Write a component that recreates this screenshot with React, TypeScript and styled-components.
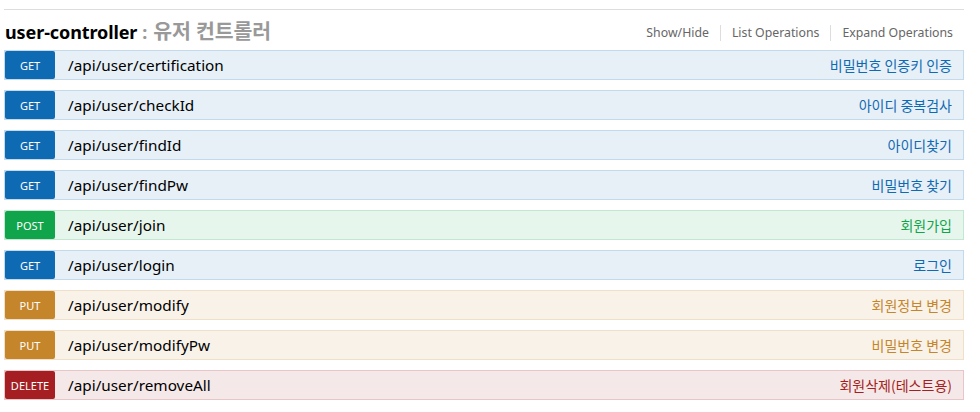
import React from "react";
import styled, { createGlobalStyle } from "styled-components";

const Global = createGlobalStyle`
  html, body { margin: 0; padding: 0; background: #fff; }
  body { font-family: "Noto Sans", "Noto Sans CJK KR", sans-serif; }
`;

type Method = "GET" | "POST" | "PUT" | "DELETE";

const palette: Record<Method, { main: string; bg: string; border: string }> = {
  GET: { main: "#0f6ab4", bg: "#e7f0f7", border: "#c3d9ec" },
  POST: { main: "#10a54a", bg: "#e7f6ec", border: "#c3e8d1" },
  PUT: { main: "#c5862b", bg: "#f9f2e9", border: "#f0e0ca" },
  DELETE: { main: "#a41e22", bg: "#f5e8e8", border: "#e8c6c7" },
};

const Resource = styled.section`
  margin: 9px 16px 0 4px;
  border-top: 1px solid #ddd;
`;

const Header = styled.div`
  display: flex;
  justify-content: space-between;
  align-items: center;
  height: 40px;
`;

const Title = styled.h2`
  margin: 0 0 0 1px;
  font-size: 18px;
  font-weight: bold;
  color: #000;
  font-family: "Noto Sans", "Noto Sans CJK KR", sans-serif;
  letter-spacing: -0.1px;
  display: flex;
  align-items: baseline;
`;

const TitleDesc = styled.span`
  color: #999;
  margin-left: 5px;
`;

const TitleKo = styled.span`
  font-size: 20.5px;
  margin-left: 6px;
`;

const Links = styled.ul`
  display: flex;
  list-style: none;
  margin: 5px 0 0;
  padding: 0;
`;

const LinkItem = styled.li<{ $first?: boolean }>`
  font-size: 12.3px;
  color: #666;
  padding: 0 11px 0 11px;
  line-height: 16px;
  border-left: ${(p) => (p.$first ? "none" : "1px solid #ddd")};
`;

const Operations = styled.ul`
  list-style: none;
  margin: 0;
  padding: 0;
  display: flex;
  flex-direction: column;
  gap: 10px;
`;

const Row = styled.li<{ $m: Method }>`
  display: flex;
  align-items: stretch;
  height: 28px;
  background: ${(p) => palette[p.$m].bg};
  border: 1px solid ${(p) => palette[p.$m].border};
`;

const Badge = styled.span<{ $m: Method }>`
  width: 50px;
  flex: none;
  display: flex;
  align-items: center;
  justify-content: center;
  background: ${(p) => palette[p.$m].main};
  color: #fff;
  font-size: 11px;
  border-radius: 2px;
  padding-top: 1px;
  box-sizing: border-box;
`;

const Path = styled.span`
  flex: 1;
  display: flex;
  align-items: center;
  padding-left: 13px;
  font-size: 15.3px;
  color: #000;
`;

const Summary = styled.span<{ $m: Method }>`
  display: flex;
  align-items: center;
  padding-right: 11px;
  font-size: 14px;
  color: ${(p) => palette[p.$m].main};
  font-family: "Noto Sans CJK KR", "Noto Sans", sans-serif;
`;

const ops: { m: Method; path: string; summary: string }[] = [
  { m: "GET", path: "/api/user/certification", summary: "비밀번호 인증키 인증" },
  { m: "GET", path: "/api/user/checkId", summary: "아이디 중복검사" },
  { m: "GET", path: "/api/user/findId", summary: "아이디찾기" },
  { m: "GET", path: "/api/user/findPw", summary: "비밀번호 찾기" },
  { m: "POST", path: "/api/user/join", summary: "회원가입" },
  { m: "GET", path: "/api/user/login", summary: "로그인" },
  { m: "PUT", path: "/api/user/modify", summary: "회원정보 변경" },
  { m: "PUT", path: "/api/user/modifyPw", summary: "비밀번호 변경" },
  { m: "DELETE", path: "/api/user/removeAll", summary: "회원삭제(테스트용)" },
];

export default function App() {
  return (
    <>
      <Global />
      <Resource>
        <Header>
          <Title>
            user-controller
            <TitleDesc>
              :<TitleKo>유저 컨트롤러</TitleKo>
            </TitleDesc>
          </Title>
          <Links>
            <LinkItem $first>Show/Hide</LinkItem>
            <LinkItem>List Operations</LinkItem>
            <LinkItem>Expand Operations</LinkItem>
          </Links>
        </Header>
        <Operations>
          {ops.map((o) => (
            <Row key={o.path} $m={o.m}>
              <Badge $m={o.m}>{o.m}</Badge>
              <Path>{o.path}</Path>
              <Summary $m={o.m}>{o.summary}</Summary>
            </Row>
          ))}
        </Operations>
      </Resource>
    </>
  );
}
